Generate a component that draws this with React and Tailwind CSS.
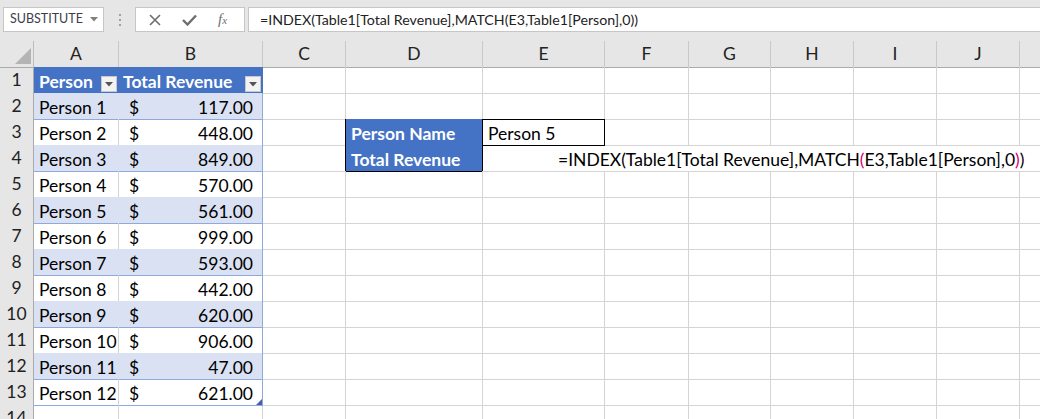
import React from "react";

const letters = ["A", "B", "C", "D", "E", "F", "G", "H", "I", "J", ""];
const revenue = [117, 448, 849, 570, 561, 999, 593, 442, 620, 906, 47, 621];
const formula = "=INDEX(Table1[Total Revenue],MATCH(E3,Table1[Person],0))";

const gridCols =
  "grid grid-cols-[34px_85px_144px_83px_137px_122px_84px_82px_83px_83px_83px_83px]";

const FilterButton = () => (
  <div className="w-[16px] h-[16px] mb-[0px] bg-[#f3f3f3] border border-[#c8c8c8] flex items-center justify-center">
    <svg width="8" height="5" viewBox="0 0 8 5">
      <polygon points="0,0 8,0 4,4.5" fill="#555" />
    </svg>
  </div>
);

const TopBar = () => (
  <div className="h-[41px] bg-[#e6e6e6] flex items-start pt-[7px] text-[#333]">
    <div className="ml-[3px] w-[101px] h-[25px] bg-white border border-[#c6c6c6] flex items-center justify-between pl-[6px] pr-[5px]">
      <span className="text-[12.5px] text-[#3c3c4c]">SUBSTITUTE</span>
      <svg width="8" height="5" viewBox="0 0 8 5">
        <polygon points="0,0 8,0 4,4.5" fill="#808080" />
      </svg>
    </div>
    <div className="w-[31px] h-[25px] flex flex-col items-center justify-center gap-[3px]">
      <div className="w-[2px] h-[2px] bg-[#a0a0a0]" />
      <div className="w-[2px] h-[2px] bg-[#a0a0a0]" />
      <div className="w-[2px] h-[2px] bg-[#a0a0a0]" />
    </div>
    <div className="w-[110px] h-[25px] bg-white border border-[#c6c6c6] flex items-center">
      <svg className="ml-[13px]" width="12" height="12" viewBox="0 0 12 12">
        <path d="M1 1 L11 11 M11 1 L1 11" stroke="#6e6e6e" strokeWidth="1.6" />
      </svg>
      <svg className="ml-[21px]" width="15" height="12" viewBox="0 0 15 12">
        <path d="M1 6 L5.5 10.5 L14 1.5" stroke="#6e6e6e" strokeWidth="2.4" fill="none" />
      </svg>
      <span className="ml-[21px] font-['Liberation_Serif',serif] italic text-[15px] text-[#6e6e6e] leading-none">
        f<span className="text-[11px]">x</span>
      </span>
    </div>
    <div className="ml-[3px] flex-1 h-[25px] bg-white border border-[#c6c6c6] border-r-0 flex items-center pl-[11px]">
      <span className="text-[14.2px] text-[#222] whitespace-nowrap">{formula}</span>
    </div>
  </div>
);

const HeaderRow = () => (
  <div className={`${gridCols} h-[26px] bg-[#e6e6e6]`}>
    <div className="h-full border-r border-b border-r-[#bcbcbc] border-b-[#ababab] relative">
      <svg className="absolute left-[15px] top-[7px]" width="17" height="17" viewBox="0 0 17 17">
        <polygon points="0,16 16,16 16,0" fill="#b4b4b4" />
      </svg>
    </div>
    {letters.map((l, i) => (
      <div
        key={i}
        className="h-full border-r border-b border-r-[#c8c8c8] border-b-[#ababab] flex items-center justify-center text-[17.5px] text-[#222]"
      >
        {l}
      </div>
    ))}
  </div>
);

const Cell = ({ className = "", children }) => (
  <div
    className={`h-full border-r border-b flex items-end pb-[1px] whitespace-nowrap text-[17.5px] leading-[20px] ${className}`}
  >
    {children}
  </div>
);

const RowHead = ({ n }) => (
  <div className="h-full bg-[#e6e6e6] border-r border-b border-r-[#ababab] border-b-[#d0d0d0] flex items-center justify-center text-[17.5px] text-[#222]">
    {n}
  </div>
);

const plain = "border-[#d4d4d4]";

const Row = ({ r }) => {
  const cells = [];
  // A and B
  if (r === 1) {
    cells.push(
      <Cell key="a" className="bg-[#4472c4] border-[#4472c4] text-white font-bold pl-[5px] pr-[1px] justify-between">
        <span>Person</span>
        <FilterButton />
      </Cell>,
      <Cell key="b" className="bg-[#4472c4] border-[#4472c4] text-white font-bold pl-[4px] pr-[1px] justify-between">
        <span>Total Revenue</span>
        <FilterButton />
      </Cell>
    );
  } else if (r <= 13) {
    const i = r - 2;
    const band = i % 2 === 0;
    cells.push(
      <Cell
        key="a"
        className={`pl-[5px] border-b-[#8ea9db] ${band ? "bg-[#d9e1f2] border-r-[#d9e1f2]" : "border-r-[#d4d4d4]"}`}
      >
        Person {i + 1}
      </Cell>,
      <Cell
        key="b"
        className={`relative pl-[10px] pr-[9px] justify-between border-[#8ea9db] ${band ? "bg-[#d9e1f2]" : ""}`}
      >
        <span>$</span>
        <span>{revenue[i].toFixed(2)}</span>
        {r === 13 && (
          <svg className="absolute right-0 bottom-0" width="6" height="6" viewBox="0 0 6 6">
            <polygon points="0,6 6,6 6,0" fill="#4a5bb0" />
          </svg>
        )}
      </Cell>
    );
  } else {
    cells.push(<Cell key="a" className={plain} />, <Cell key="b" className={plain} />);
  }

  // C
  cells.push(
    <Cell key="c" className={r === 3 || r === 4 ? "border-b-[#d4d4d4] border-r-black" : plain} />
  );

  if (r === 3) {
    cells.push(
      <Cell key="d" className="bg-[#4472c4] border-black text-white font-bold pl-[5px]">
        Person Name
      </Cell>,
      <Cell key="e" className="border-black pl-[5px]">
        Person 5
      </Cell>
    );
    ["f", "g", "h", "i", "j", "k"].forEach((k) => cells.push(<Cell key={k} className={plain} />));
  } else if (r === 4) {
    cells.push(
      <Cell key="d" className="bg-[#4472c4] border-black text-white font-bold pl-[5px]">
        Total Revenue
      </Cell>,
      <Cell key="e" className="col-span-7 border-r-transparent border-b-[#d4d4d4] pl-[75px]">
        <span>
          =INDEX(Table1[Total Revenue],MATCH<span className="text-[#d6007a]">(</span>E3,Table1[Person],0
          <span className="text-[#d6007a]">)</span>)
        </span>
      </Cell>
    );
  } else {
    ["d", "e"].forEach((k) =>
      cells.push(
        <Cell key={k} className={r === 2 ? "border-r-[#d4d4d4] border-b-black" : plain} />
      )
    );
    ["f", "g", "h", "i", "j", "k"].forEach((k) => cells.push(<Cell key={k} className={plain} />));
  }

  return (
    <div className={`${gridCols} h-[26px]`}>
      <RowHead n={r} />
      {cells}
    </div>
  );
};

export default function App() {
  return (
    <div className="w-[1040px] h-[419px] overflow-hidden bg-white font-['Lato',sans-serif] text-black">
      <TopBar />
      <HeaderRow />
      {Array.from({ length: 14 }, (_, i) => (
        <Row key={i} r={i + 1} />
      ))}
    </div>
  );
}
